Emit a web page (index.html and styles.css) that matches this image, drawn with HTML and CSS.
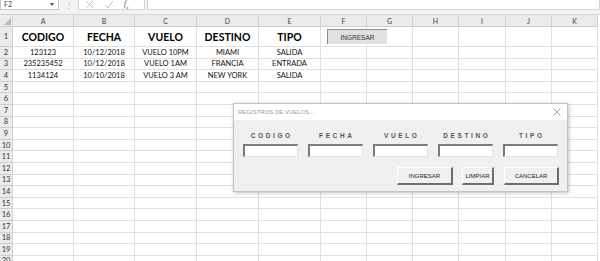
FILE: index.html
```html
<!DOCTYPE html>
<html lang="es">

<head>
  <meta charset="UTF-8">
  <meta name="viewport" content="width=device-width, initial-scale=1.0">
  <title>registros de vuelos</title>
  <link rel="stylesheet" href="styles.css">
</head>

<body>
  <div class="formula-bar">
    <div class="name-box">F2<span class="caret"></span></div>
    <div class="bar-dots">&#8942;</div>
    <div class="bar-buttons">
      <svg class="bar-icon" width="9" height="9" viewBox="0 0 9 9">
        <path d="M1 1 L8 8 M8 1 L1 8" stroke="#c4c4c4" stroke-width="1" fill="none" />
      </svg>
      <svg class="bar-icon" width="10" height="9" viewBox="0 0 10 9">
        <path d="M1 5 L4 8 L9 1" stroke="#c4c4c4" stroke-width="1" fill="none" />
      </svg>
      <span class="fx">f<sub>x</sub></span>
    </div>
    <div class="formula-input"></div>
  </div>

  <div class="sheet" id="sheet"></div>

  <button type="button" class="sheet-button">INGRESAR</button>

  <div class="dialog">
    <div class="dialog-title">
      <span>REGISTROS DE VUELOS...</span>
      <svg width="8" height="8" viewBox="0 0 8 8">
        <path d="M0.5 0.5 L7.5 7.5 M7.5 0.5 L0.5 7.5" stroke="#9a9a9a" stroke-width="0.9" fill="none" />
      </svg>
    </div>
    <div class="dialog-body">
      <div class="fields">
        <label class="field"><span>CODIGO</span><input type="text"></label>
        <label class="field"><span>FECHA</span><input type="text"></label>
        <label class="field"><span>VUELO</span><input type="text"></label>
        <label class="field"><span>DESTINO</span><input type="text"></label>
        <label class="field"><span>TIPO</span><input type="text"></label>
      </div>
      <div class="actions">
        <button type="button" class="btn-ingresar">INGRESAR</button>
        <button type="button" class="btn-limpiar">LIMPIAR</button>
        <button type="button" class="btn-cancelar">CANCELAR</button>
      </div>
    </div>
  </div>

  <script>
    // datos de la hoja
    const columnas = ['A', 'B', 'C', 'D', 'E', 'F', 'G', 'H', 'I', 'J', 'K'];
    const filas = [
      ['CODIGO', 'FECHA', 'VUELO', 'DESTINO', 'TIPO'],
      ['123123', '10/12/2018', 'VUELO 10PM', 'MIAMI', 'SALIDA'],
      ['235235452', '10/12/2018', 'VUELO 1AM', 'FRANCIA', 'ENTRADA'],
      ['1134124', '10/10/2018', 'VUELO 3 AM', 'NEW YORK', 'SALIDA']
    ];
    const totalFilas = 20;

    const sheet = document.getElementById('sheet');

    function celda(clase, texto) {
      let div = document.createElement('div');
      div.className = clase;
      if (texto) div.textContent = texto;
      sheet.appendChild(div);
    }

    celda('corner');
    columnas.forEach(c => celda('col-head', c));

    for (let r = 1; r <= totalFilas; r++) {
      celda('row-head', r);
      let datos = filas[r - 1] || [];
      columnas.forEach((c, i) => {
        celda(r == 1 ? 'cell title-cell' : 'cell', datos[i]);
      });
    }
  </script>
</body>

</html>
```

FILE: styles.css
```css
* {
  margin: 0;
  padding: 0;
  box-sizing: border-box;
}

body {
  width: 600px;
  height: 261px;
  overflow: hidden;
  background: #fff;
  font-family: Lato, "Liberation Sans", sans-serif;
  position: relative;
}

/* barra de formulas */
.formula-bar {
  height: 15px;
  display: flex;
  align-items: flex-start;
  background: #f3f3f3;
  border-bottom: 1px solid #d6d6d6;
}

.name-box {
  width: 59px;
  height: 11px;
  margin-top: -1px;
  background: #fff;
  border: 1px solid #c6c6c6;
  font-size: 7px;
  line-height: 9px;
  color: #444;
  padding-left: 3px;
  position: relative;
}

.caret {
  position: absolute;
  right: 4px;
  top: 3px;
  border: 2px solid transparent;
  border-top: 3px solid #555;
}

.bar-dots {
  width: 19px;
  text-align: center;
  font-size: 8px;
  line-height: 10px;
  color: #aaa;
}

.bar-buttons {
  width: 67px;
  height: 11px;
  margin-top: -1px;
  background: #fff;
  border: 1px solid #d4d4d4;
  display: flex;
  align-items: center;
  padding-left: 6px;
  gap: 10px;
}

.fx {
  font-family: "Liberation Serif", serif;
  font-style: italic;
  font-size: 8px;
  color: #555;
}

.fx sub {
  font-size: 5px;
}

.formula-input {
  flex: 1;
  height: 11px;
  margin-top: -1px;
  margin-left: 2px;
  background: #fff;
  border: 1px solid #d4d4d4;
}

/* hoja */
.sheet {
  display: grid;
  grid-template-columns: 13px 61px 61px 62px 62px 62px 46px 46px 46px 47px 46px 46px;
  grid-template-rows: 12px 20px repeat(19, 11.6px);
}

.corner,
.col-head,
.row-head {
  background: #ebebeb;
  border-right: 1px solid #d2d2d2;
  border-bottom: 1px solid #cdcdcd;
  color: #444;
  font-size: 7px;
  display: flex;
  align-items: center;
  justify-content: center;
}

.corner {
  position: relative;
}

.corner::after {
  content: "";
  position: absolute;
  right: 1px;
  bottom: 1px;
  border-left: 7px solid transparent;
  border-bottom: 7px solid #b9b9b9;
}

.col-head {
  font-size: 7px;
}

.row-head {
  font-size: 7.5px;
  color: #333;
}

.cell {
  border-right: 1px solid #e1e1e1;
  border-bottom: 1px solid #e1e1e1;
  font-size: 7.5px;
  color: #111;
  display: flex;
  align-items: center;
  justify-content: center;
  white-space: nowrap;
}

.title-cell {
  font-size: 10.5px;
  font-weight: bold;
  color: #000;
  padding-top: 1px;
}

/* boton sobre la hoja */
.sheet-button {
  position: absolute;
  left: 327px;
  top: 29px;
  width: 60px;
  height: 15px;
  background: #e1e1e1;
  border: none;
  border-top: 1px solid #8a8a8a;
  border-left: 1px solid #8a8a8a;
  font-family: "Liberation Sans", sans-serif;
  font-size: 6.5px;
  color: #333;
}

/* formulario */
.dialog {
  position: absolute;
  left: 233px;
  top: 103px;
  width: 335px;
  height: 89px;
  background: #f0f0f0;
  border: 1px solid #c3c3c3;
  box-shadow: 1px 1px 4px rgba(0, 0, 0, 0.25);
  font-family: "Liberation Sans", sans-serif;
}

.dialog-title {
  height: 16px;
  background: #fff;
  display: flex;
  align-items: center;
  justify-content: space-between;
  padding: 0 6px 0 4px;
  font-size: 6px;
  color: #9a9a9a;
}

.dialog-body {
  padding: 11px 8px 5px 9px;
}

.fields {
  display: flex;
  gap: 10px;
}

.field {
  width: 55px;
  display: flex;
  flex-direction: column;
  align-items: center;
  gap: 4px;
}

.field span {
  font-size: 6.5px;
  line-height: 9px;
  font-weight: bold;
  letter-spacing: 2.6px;
  padding-left: 2.6px;
  color: #555;
}

.field input {
  width: 55px;
  height: 13px;
  background: #fff;
  border: 1px solid #e3e3e3;
  border-top: 2px solid #7a7a7a;
  border-left: 2px solid #7a7a7a;
  outline: none;
}

.actions {
  display: flex;
  justify-content: flex-end;
  margin-top: 10px;
}

.actions button {
  height: 18px;
  background: #f0f0f0;
  border: 1px solid #fff;
  border-right: 2px solid #6e6e6e;
  border-bottom: 2px solid #6e6e6e;
  font-family: "Liberation Sans", sans-serif;
  font-size: 6px;
  color: #222;
}

.btn-ingresar {
  width: 56px;
}

.btn-limpiar {
  width: 32px;
  margin-left: 9px;
}

.btn-cancelar {
  width: 55px;
  margin-left: 10px;
}
```
